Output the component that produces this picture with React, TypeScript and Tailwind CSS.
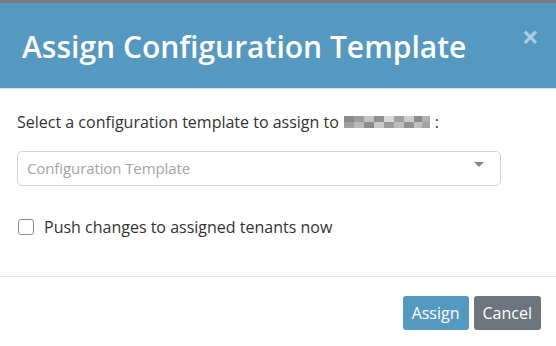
import React from "react";

export default function App() {
  return (
    <div className="w-[556px] h-[346px] bg-white overflow-hidden flex flex-col" style={{ fontFamily: '"Open Sans", "Noto Sans", sans-serif' }}>
      <div className="h-[3px] bg-[#7b7b7b] shrink-0" />
      <div className="h-[86px] bg-[#5598c0] border-b border-[#dcdcea] flex items-start justify-between pl-[22px] pr-[17px] shrink-0">
        <h1 className="text-white text-[30px] font-semibold mt-[24px] leading-[40px]">Assign Configuration Template</h1>
        <span className="text-[#a8cde2] text-[30px] font-bold leading-none mt-[19px]">×</span>
      </div>
      <div className="flex flex-col px-[17px] pt-[22px] h-[188px] border-b border-[#e5e5e5] shrink-0">
        <p className="text-[16px] text-[#333] leading-[22px] flex items-center gap-[5px]">
          <span>Select a configuration template to assign to</span>
          <span className="inline-flex flex-col h-[12px] w-[86px]">
            <span className="flex h-[6px]">
              <span className="w-[10px] bg-[#8a8a8a]" />
              <span className="w-[10px] bg-[#9c9c9c]" />
              <span className="w-[10px] bg-[#c4c4c4]" />
              <span className="w-[10px] bg-[#8f8f8f]" />
              <span className="w-[10px] bg-[#d8d8d8]" />
              <span className="w-[10px] bg-[#a0a0a0]" />
              <span className="w-[10px] bg-[#cccccc]" />
              <span className="w-[8px] bg-[#8c8c8c]" />
              <span className="w-[8px] bg-[#b0b0b0]" />
            </span>
            <span className="flex h-[6px]">
              <span className="w-[10px] bg-[#a0a0a0]" />
              <span className="w-[10px] bg-[#b8b8b8]" />
              <span className="w-[10px] bg-[#8c8c8c]" />
              <span className="w-[10px] bg-[#c8c8c8]" />
              <span className="w-[10px] bg-[#9a9a9a]" />
              <span className="w-[10px] bg-[#bcbcbc]" />
              <span className="w-[10px] bg-[#909090]" />
              <span className="w-[8px] bg-[#c0c0c0]" />
              <span className="w-[8px] bg-[#a4a4a4]" />
            </span>
          </span>
          <span>:</span>
        </p>
        <div className="mt-[18px] w-[484px] h-[35px] border border-[#d3d3d3] rounded-[5px] flex items-center justify-between pl-[9px] pr-[16px]">
          <span className="text-[15px] text-[#a4a4a4] tracking-[-0.1px]">Configuration Template</span>
          <span className="w-0 h-0 border-l-[5px] border-r-[5px] border-t-[5px] border-l-transparent border-r-transparent border-t-[#888] mb-[8px]" />
        </div>
        <label className="mt-[29px] flex items-center gap-[10px] text-[16px] text-[#333]">
          <span className="w-[16px] h-[16px] border border-[#8a8a8a] rounded-[3px] ml-[1px]" />
          <span>Push changes to assigned tenants now</span>
        </label>
      </div>
      <div className="flex justify-end gap-[5px] pr-[15px] pt-[19px]">
        <button className="h-[34px] px-[9px] bg-[#5598c0] text-white text-[16px] rounded-[3px]">Assign</button>
        <button className="h-[34px] px-[9px] bg-[#6c757d] text-white text-[16px] rounded-[3px]">Cancel</button>
      </div>
    </div>
  );
}
